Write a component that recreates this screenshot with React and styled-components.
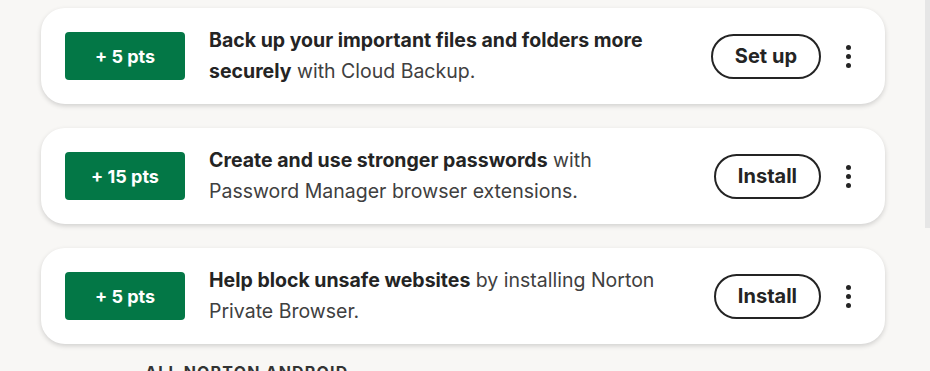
import React from "react";
import styled, { createGlobalStyle } from "styled-components";

const GlobalStyle = createGlobalStyle`
  body {
    margin: 0;
    background: #f8f7f5;
    font-family: Inter, "Noto Sans", sans-serif;
    overflow: hidden;
  }
`;

const Page = styled.div`
  display: flex;
  flex-direction: column;
  gap: 24px;
  padding: 8px 0 0 41px;
  width: 844px;
`;

const Card = styled.div`
  display: flex;
  align-items: center;
  height: 96px;
  box-sizing: border-box;
  padding: 0 25px 0 24px;
  background: #fff;
  border-radius: 24px;
  box-shadow: 0 2px 5px rgba(0, 0, 0, 0.16);
`;

const Badge = styled.div`
  flex: 0 0 120px;
  height: 48px;
  display: flex;
  align-items: center;
  justify-content: center;
  background: #037746;
  border-radius: 4px;
  color: #fff;
  font-size: 18px;
  font-weight: 700;
`;

const Text = styled.p`
  margin: 0 0 0 24px;
  width: 466px;
  font-size: 19.5px;
  line-height: 31px;
  color: #404040;

  b {
    color: #242424;
    font-weight: 700;
  }
`;

const Action = styled.button`
  margin-left: auto;
  height: 45px;
  padding: 0 22px;
  border: 2px solid #242424;
  border-radius: 23px;
  background: #fff;
  font-family: inherit;
  font-size: 20px;
  font-weight: 700;
  color: #242424;
  cursor: pointer;
`;

const Kebab = styled.button`
  flex: 0 0 24px;
  margin-left: 15px;
  display: flex;
  flex-direction: column;
  align-items: center;
  gap: 4px;
  padding: 0;
  border: 0;
  background: none;

  span {
    width: 5px;
    height: 5px;
    border-radius: 50%;
    background: #242424;
  }
`;

const Section = styled.h3`
  margin: -5px 0 0 104px;
  font-size: 16px;
  line-height: 18px;
  font-weight: 700;
  letter-spacing: 1.2px;
  color: #333;
  text-transform: uppercase;
`;

const Scrollbar = styled.div`
  position: fixed;
  top: 0;
  right: 0;
  width: 5px;
  height: 228px;
  background: #e6e6e6;
`;

const tasks = [
  {
    pts: 5,
    bold: "Back up your important files and folders more securely",
    rest: " with Cloud Backup.",
    action: "Set up",
  },
  {
    pts: 15,
    bold: "Create and use stronger passwords",
    rest: " with Password Manager browser extensions.",
    action: "Install",
  },
  {
    pts: 5,
    bold: "Help block unsafe websites",
    rest: " by installing Norton Private Browser.",
    action: "Install",
  },
];

export default function App() {
  return (
    <>
      <GlobalStyle />
      <Page>
        {tasks.map((t, i) => (
          <Card key={i}>
            <Badge>+ {t.pts} pts</Badge>
            <Text>
              <b>{t.bold}</b>
              {t.rest}
            </Text>
            <Action>{t.action}</Action>
            <Kebab aria-label="More options">
              <span />
              <span />
              <span />
            </Kebab>
          </Card>
        ))}
        <Section>All Norton Android</Section>
      </Page>
      <Scrollbar />
    </>
  );
}
